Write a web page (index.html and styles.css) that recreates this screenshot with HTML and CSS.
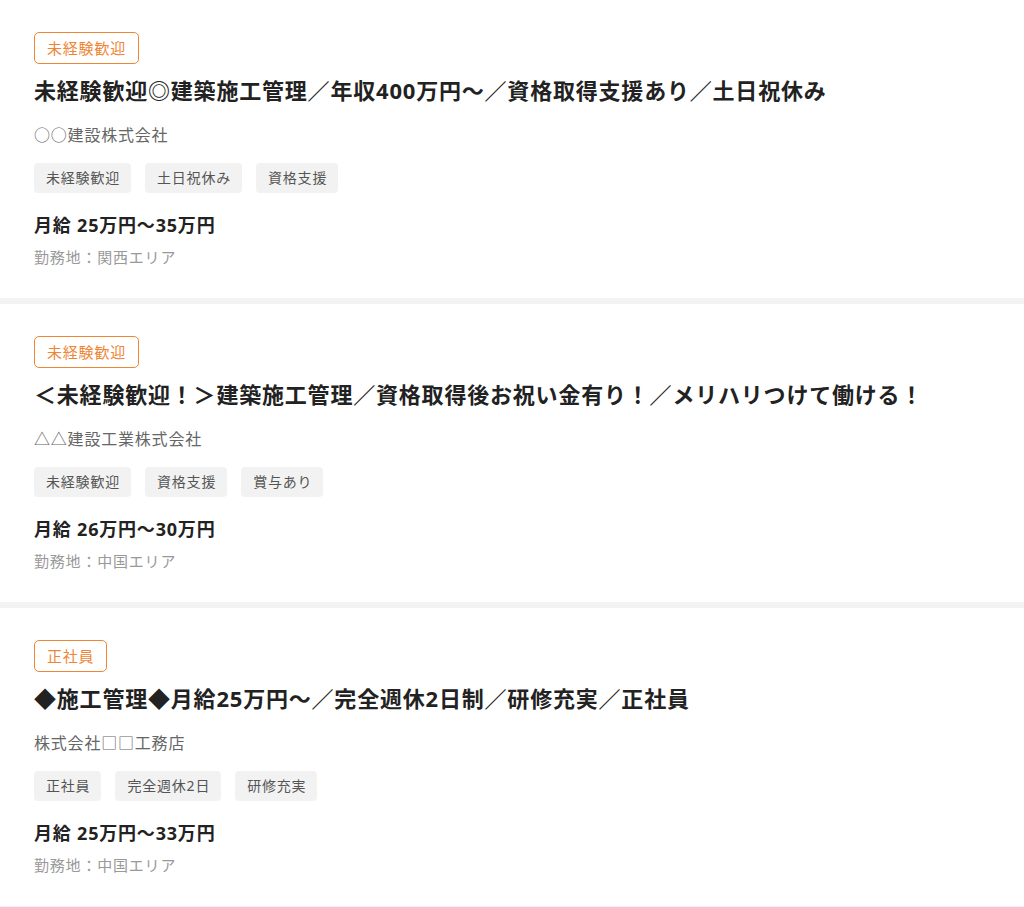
FILE: index.html
```html
<!DOCTYPE html>
<html lang="ja">
<head>
<meta charset="utf-8">
<title>求人一覧</title>
<link rel="stylesheet" href="styles.css">
</head>
<body>
<main class="list">
  <article class="card">
    <span class="badge">未経験歓迎</span>
    <h2 class="title">未経験歓迎◎建築施工管理／年収400万円〜／資格取得支援あり／土日祝休み</h2>
    <p class="company">○○建設株式会社</p>
    <ul class="tags">
      <li class="tag">未経験歓迎</li>
      <li class="tag">土日祝休み</li>
      <li class="tag">資格支援</li>
    </ul>
    <p class="salary">月給 25万円〜35万円</p>
    <p class="location">勤務地：関西エリア</p>
  </article>
  <article class="card">
    <span class="badge">未経験歓迎</span>
    <h2 class="title">＜未経験歓迎！＞建築施工管理／資格取得後お祝い金有り！／メリハリつけて働ける！</h2>
    <p class="company">△△建設工業株式会社</p>
    <ul class="tags">
      <li class="tag">未経験歓迎</li>
      <li class="tag">資格支援</li>
      <li class="tag">賞与あり</li>
    </ul>
    <p class="salary">月給 26万円〜30万円</p>
    <p class="location">勤務地：中国エリア</p>
  </article>
  <article class="card">
    <span class="badge">正社員</span>
    <h2 class="title">◆施工管理◆月給25万円〜／完全週休2日制／研修充実／正社員</h2>
    <p class="company">株式会社□□工務店</p>
    <ul class="tags">
      <li class="tag">正社員</li>
      <li class="tag">完全週休2日</li>
      <li class="tag">研修充実</li>
    </ul>
    <p class="salary">月給 25万円〜33万円</p>
    <p class="location">勤務地：中国エリア</p>
  </article>
</main>
</body>
</html>
```

FILE: styles.css
```css
* {
  box-sizing: border-box;
}

html, body {
  margin: 0;
  padding: 0;
  background: #ffffff;
}

body {
  font-family: "Noto Sans", "Noto Sans CJK JP", sans-serif;
  color: #222222;
  letter-spacing: 0.05em;
}

.list {
  display: flex;
  flex-direction: column;
}

.card {
  display: flex;
  flex-direction: column;
  align-items: flex-start;
  padding: 32px 34px 30px;
  border-bottom: 6px solid #f3f3f3;
}

.badge {
  display: inline-block;
  font-size: 15px;
  line-height: 22px;
  padding: 4px 12px;
  color: #ee8636;
  border: 1px solid #ee8636;
  border-radius: 5px;
}

.title {
  margin: 10px 0 0;
  font-size: 22px;
  line-height: 33px;
  font-weight: 700;
  color: #222222;
}

.company {
  margin: 16px 0 0;
  font-size: 16px;
  line-height: 24px;
  color: #666666;
}

.tags {
  display: flex;
  gap: 14px;
  list-style: none;
  margin: 16px 0 0;
  padding: 0;
}

.tag {
  font-size: 14px;
  line-height: 22px;
  padding: 4px 11px 4px 12px;
  background: #f2f2f2;
  color: #555555;
  border-radius: 4px;
}

.salary {
  margin: 19px 0 0;
  font-size: 18px;
  line-height: 27px;
  font-weight: 700;
  color: #222222;
}

.location {
  margin: 7px 0 0;
  font-size: 15px;
  line-height: 22px;
  color: #999999;
}
```
